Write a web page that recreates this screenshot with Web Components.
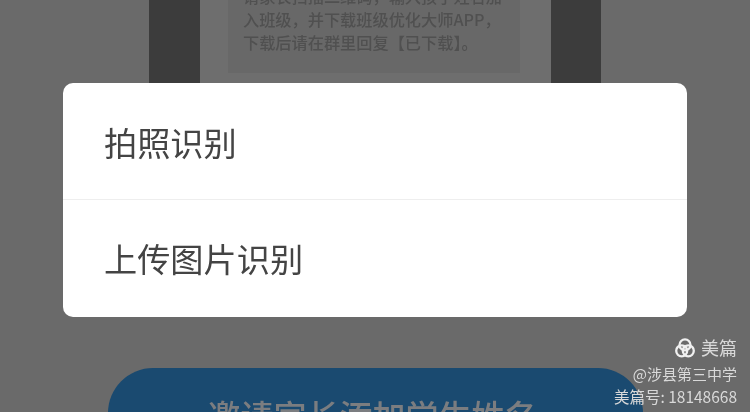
<!DOCTYPE html>
<html lang="zh">
<head>
<meta charset="utf-8">
<title>识别</title>
<style>
  html, body { margin: 0; padding: 0; background: #6a6a6a; }
  body { font-family: "Noto Sans CJK SC", "Noto Sans", sans-serif; }
</style>
</head>
<body>
<app-screen>
  <poster-strip>
    <p>请家长扫描二维码，输入孩子姓名加</p>
    <p>入班级，并下载班级优化大师APP，</p>
    <p>下载后请在群里回复【已下载】。</p>
  </poster-strip>
  <choice-dialog>
    <choice-row>拍照识别</choice-row>
    <choice-row>上传图片识别</choice-row>
  </choice-dialog>
  <invite-button>邀请家长添加学生姓名</invite-button>
  <mp-watermark slot="over" account="@涉县第三中学" number="美篇号: 18148668"></mp-watermark>
</app-screen>

<script>
class appScreen extends HTMLElement {
  connectedCallback() {
    this.attachShadow({mode: 'open'});
    this.shadowRoot.innerHTML = `
      <style>
        :host {
          display: flex;
          flex-direction: column;
          position: relative;
          width: 750px;
          height: 412px;
          overflow: hidden;
          background: #6a6a6a;
        }
      </style>
      <slot></slot>
      <slot name="over"></slot>
    `;
  }
}

class posterStrip extends HTMLElement {
  connectedCallback() {
    this.attachShadow({mode: 'open'});
    this.shadowRoot.innerHTML = `
      <style>
        :host {
          display: flex;
          flex: none;
          justify-content: center;
          height: 83px;
          overflow: hidden;
        }
        .frame {
          display: flex;
          width: 452px;
          background: #3c3c3c;
          padding: 0 50px 0 51px;
          box-sizing: border-box;
        }
        .panel {
          flex: 1;
          min-width: 0;
          background: #6e6e6e;
          padding: 0 31px 10px 28px;
        }
        .card {
          height: 100%;
          box-sizing: border-box;
          background: #686868;
          padding: 0 0 19px 15px;
          display: flex;
          flex-direction: column;
          justify-content: flex-end;
          overflow: hidden;
          font-size: 16.2px;
          font-weight: 500;
          line-height: 23px;
          color: #505050;
          filter: blur(.6px);
        }
        ::slotted(p) {
          margin: 0;
          white-space: nowrap;
        }
      </style>
      <div class="frame"><div class="panel"><div class="card"><slot></slot></div></div></div>
    `;
  }
}

class choiceDialog extends HTMLElement {
  connectedCallback() {
    this.attachShadow({mode: 'open'});
    this.shadowRoot.innerHTML = `
      <style>
        :host {
          display: flex;
          flex: none;
          flex-direction: column;
          width: 624px;
          height: 234px;
          margin: 0 0 51px 63px;
          background: #fff;
          border-radius: 10px;
          overflow: hidden;
        }
      </style>
      <slot></slot>
    `;
  }
}

class choiceRow extends HTMLElement {
  connectedCallback() {
    this.attachShadow({mode: 'open'});
    this.shadowRoot.innerHTML = `
      <style>
        :host {
          display: flex;
          flex: 1;
          align-items: center;
          padding: 0 0 2px 41px;
          font-size: 33.2px;
          color: #444444;
          filter: blur(.3px);
        }
        :host(:not(:last-child)) {
          flex: none;
          height: 116px;
          padding-bottom: 0;
          border-bottom: 1px solid #eeeeee;
        }
      </style>
      <slot></slot>
    `;
  }
}

class inviteButton extends HTMLElement {
  connectedCallback() {
    this.attachShadow({mode: 'open'});
    this.shadowRoot.innerHTML = `
      <style>
        :host {
          display: flex;
          flex: none;
          box-sizing: border-box;
          justify-content: center;
          width: 535px;
          height: 90px;
          margin-left: 108px;
          padding: 23px 6px 0 0;
          background: #1a4a70;
          border-radius: 45px;
          font-size: 33px;
          font-weight: 500;
          line-height: 48px;
          color: #7b7d80;
          filter: blur(.5px);
        }
      </style>
      <slot></slot>
    `;
  }
}

class mpWatermark extends HTMLElement {
  connectedCallback() {
    this.attachShadow({mode: 'open'});
    this.shadowRoot.innerHTML = `
      <style>
        :host {
          display: flex;
          flex-direction: column;
          align-items: flex-end;
          position: absolute;
          right: 13px;
          top: 334px;
          color: #d9d9d9;
          font-size: 15.5px;
          line-height: 23px;
          filter: blur(.3px);
        }
        .brand {
          display: flex;
          align-items: center;
          gap: 6px;
          height: 27px;
          font-size: 18px;
          margin-bottom: 1px;
        }
        .account { font-size: 15px; }
        svg { display: block; }
      </style>
      <div class="brand">
        <svg width="20" height="20" viewBox="0 0 20 20" fill="none" stroke="#f0f0f0" stroke-width="2.3">
          <circle cx="10" cy="6.9" r="5.5"/>
          <circle cx="6.7" cy="12.8" r="5.5"/>
          <circle cx="13.3" cy="12.8" r="5.5"/>
        </svg>
        <span>美篇</span>
      </div>
      <div class="account">${this.getAttribute('account')}</div>
      <div>${this.getAttribute('number')}</div>
    `;
  }
}

customElements.define("app-screen", appScreen);
customElements.define("poster-strip", posterStrip);
customElements.define("choice-dialog", choiceDialog);
customElements.define("choice-row", choiceRow);
customElements.define("invite-button", inviteButton);
customElements.define("mp-watermark", mpWatermark);
</script>
</body>
</html>
